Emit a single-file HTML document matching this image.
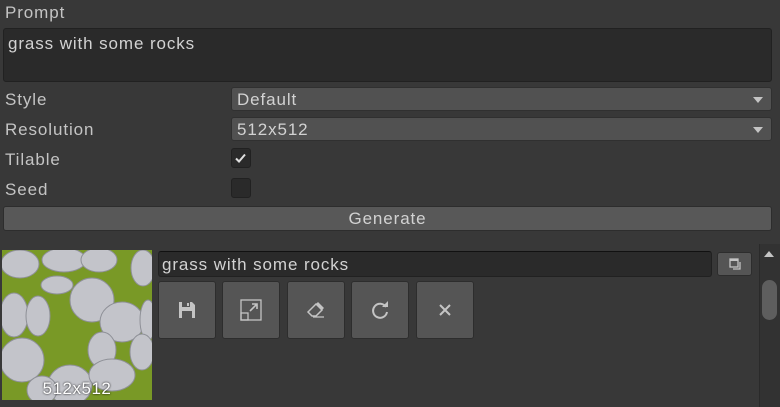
<!DOCTYPE html>
<html><head><meta charset="utf-8"><style>
*{box-sizing:border-box;margin:0;padding:0}
body{width:780px;height:407px;background:#383838;font-family:"Liberation Sans",sans-serif;color:#c4c4c4;font-size:17px;letter-spacing:0.9px;position:relative;overflow:hidden}
.a{position:absolute}
.lbl{left:5px;line-height:20px}
.field{background:#2a2a2a;border:1px solid #212121;border-radius:3px}
.dd{background:#515151;border:1px solid #303030;border-radius:3px;left:231px;width:541px;height:24px;padding-left:5px;line-height:23px;color:#d2d2d2}
.dd:after{content:"";position:absolute;right:8px;top:9px;border-left:5px solid transparent;border-right:5px solid transparent;border-top:6px solid #c4c4c4}
.cb{left:231px;width:20px;height:20px;background:#2a2a2a;border:1px solid #212121;border-radius:3px}
.btn{background:#555;border:1px solid #2d2d2d;border-radius:3px;width:58px;height:58px;top:281px;display:flex;align-items:center;justify-content:center}
</style></head><body>
<div class="a lbl" style="top:3px">Prompt</div>
<div class="a field" style="left:3px;top:28px;width:769px;height:54px;padding:4px 4px;line-height:21px;color:#d2d2d2">grass with some rocks</div>
<div class="a lbl" style="top:90px">Style</div>
<div class="a dd" style="top:87px">Default</div>
<div class="a lbl" style="top:120px">Resolution</div>
<div class="a dd" style="top:117px">512x512</div>
<div class="a lbl" style="top:150px">Tilable</div>
<div class="a cb" style="top:148px"><svg width="18" height="18" viewBox="0 0 18 18"><path d="M4 9.5l3 3 6-7" stroke="#e0e0e0" stroke-width="2" fill="none"/></svg></div>
<div class="a lbl" style="top:180px">Seed</div>
<div class="a cb" style="top:178px"></div>
<div class="a" style="left:3px;top:206px;width:769px;height:25px;background:#585858;border:1px solid #2d2d2d;border-radius:3px;text-align:center;line-height:24px;color:#d2d2d2">Generate</div>

<svg class="a" style="left:2px;top:250px" width="150" height="150" viewBox="0 0 150 150">
<rect width="150" height="150" fill="#6e8e22"/>
<rect width="150" height="150" fill="#8aa92e" opacity=".4"/>
<g fill="#c3c4ca" stroke="#8e9097" stroke-width="1">
<ellipse cx="18" cy="14" rx="19" ry="14"/><ellipse cx="62" cy="10" rx="22" ry="12"/><ellipse cx="97" cy="10" rx="18" ry="12"/><ellipse cx="141" cy="18" rx="12" ry="18"/>
<ellipse cx="55" cy="35" rx="16" ry="9"/><ellipse cx="90" cy="50" rx="22" ry="22"/><ellipse cx="12" cy="65" rx="14" ry="22"/><ellipse cx="36" cy="66" rx="12" ry="20"/>
<ellipse cx="120" cy="72" rx="22" ry="20"/><ellipse cx="146" cy="70" rx="8" ry="20"/><ellipse cx="20" cy="110" rx="22" ry="22"/><ellipse cx="100" cy="100" rx="14" ry="18"/>
<ellipse cx="140" cy="102" rx="12" ry="18"/><ellipse cx="68" cy="135" rx="22" ry="20"/><ellipse cx="110" cy="125" rx="23" ry="16"/><ellipse cx="40" cy="140" rx="15" ry="14"/>
</g></svg>
<div class="a" style="left:2px;top:379px;width:150px;text-align:center;color:#fff;line-height:20px;text-shadow:0 0 2px #000;letter-spacing:0.5px">512x512</div>

<div class="a field" style="left:158px;top:251px;width:554px;height:26px;padding-left:3px;line-height:25px;color:#d2d2d2;border-top-color:#111">grass with some rocks</div>
<div class="a" style="left:717px;top:252px;width:35px;height:24px;background:#555;border:1px solid #2d2d2d;border-radius:3px">
<svg style="position:absolute;left:11px;top:5px" width="13" height="13" viewBox="0 0 13 13"><rect x="1" y="1" width="8" height="8" fill="none" stroke="#c4c4c4" stroke-width="1.3"/><rect x="1" y="1" width="8" height="2" fill="#c4c4c4"/><path d="M11 4v7H4" fill="none" stroke="#c4c4c4" stroke-width="1.3"/></svg></div>

<div class="a btn" style="left:158px"><svg width="18" height="18" viewBox="0 0 18 18"><path d="M1 1h13l3 3v13H1z" fill="#c4c4c4"/><rect x="4" y="1" width="8" height="5" fill="#555"/><rect x="9" y="2" width="2" height="3" fill="#c4c4c4"/><rect x="4" y="10" width="10" height="7" fill="#555"/></svg></div>
<div class="a btn" style="left:222px"><svg width="22" height="22" viewBox="0 0 22 22"><rect x="1" y="1" width="20" height="20" fill="none" stroke="#c4c4c4" stroke-width="1.3"/><rect x="1" y="14" width="7" height="7" fill="none" stroke="#c4c4c4" stroke-width="1.3"/><path d="M10 12l7-7M12 5h5v5" fill="none" stroke="#c4c4c4" stroke-width="1.6"/></svg></div>
<div class="a btn" style="left:287px"><svg width="20" height="18" viewBox="0 0 20 18"><path d="M2 11l8-8 6 6-6 6H6z" fill="none" stroke="#c4c4c4" stroke-width="1.5"/><path d="M10 3l6 6 2-2-6-6z" fill="#c4c4c4"/><path d="M7 16h11" stroke="#c4c4c4" stroke-width="1.3"/></svg></div>
<div class="a btn" style="left:351px"><svg width="20" height="20" viewBox="0 0 20 20"><path d="M16 7A7 7 0 1 0 17 12" fill="none" stroke="#c4c4c4" stroke-width="2"/><path d="M12 7h6V1z" fill="#c4c4c4"/></svg></div>
<div class="a btn" style="left:416px"><svg width="14" height="14" viewBox="0 0 14 14"><path d="M2 2l10 10M12 2L2 12" stroke="#c4c4c4" stroke-width="2"/></svg></div>

<div class="a" style="left:759px;top:244px;width:21px;height:163px;background:#323232;border-left:1px solid #2a2a2a"></div>
<div class="a" style="left:764px;top:251px;border-left:5px solid transparent;border-right:5px solid transparent;border-bottom:6px solid #c4c4c4"></div>
<div class="a" style="left:762px;top:280px;width:15px;height:40px;background:#5e5e5e;border-radius:8px"></div>
</body></html>
